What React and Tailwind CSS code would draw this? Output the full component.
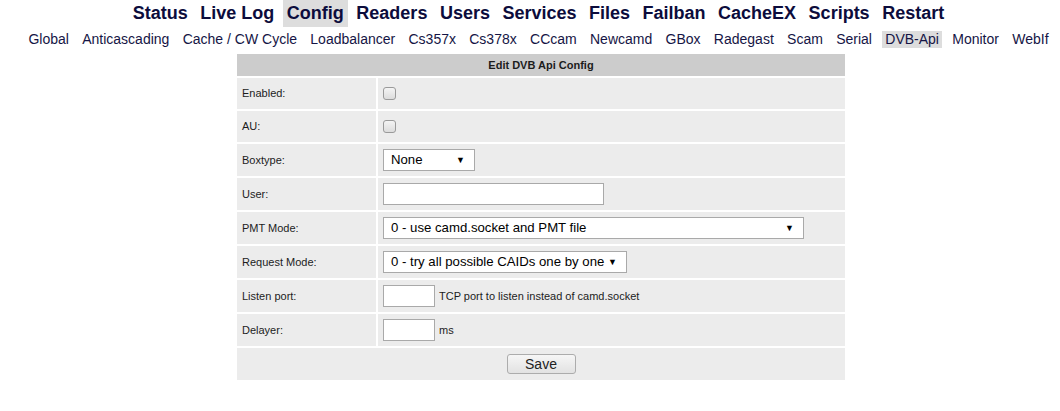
import React from 'react'

const mainMenu = ['Status', 'Live Log', 'Config', 'Readers', 'Users', 'Services', 'Files', 'Failban', 'CacheEX', 'Scripts', 'Restart']
const subMenu = ['Global', 'Anticascading', 'Cache / CW Cycle', 'Loadbalancer', 'Cs357x', 'Cs378x', 'CCcam', 'Newcamd', 'GBox', 'Radegast', 'Scam', 'Serial', 'DVB-Api', 'Monitor', 'WebIf']

const Checkbox = () => (
  <span className="block w-[13px] h-[13px] rounded-[3px] border border-[#9a9a9a] bg-gradient-to-b from-[#f4f4f4] to-[#dcdcdc]" />
)

const Select = ({ value, width }) => (
  <div className={`relative h-[22px] ${width} border border-[#a9a9a9] bg-white`}>
    <span className="block pl-[7px] text-[13.2px] leading-[20px] text-black whitespace-nowrap">{value}</span>
    <span className="absolute right-[9px] top-0 text-[9px] leading-[20px] text-black">▼</span>
  </div>
)

const TextBox = ({ width }) => (
  <div className={`h-[22px] ${width} border border-[#a9a9a9] bg-white`} />
)

const rows = [
  { label: 'Enabled:', h: 'h-[31px]', field: <Checkbox /> },
  { label: 'AU:', h: 'h-[31px]', field: <Checkbox /> },
  { label: 'Boxtype:', field: <Select value="None" width="w-[92px]" /> },
  { label: 'User:', field: <TextBox width="w-[221px]" /> },
  { label: 'PMT Mode:', field: <Select value="0 - use camd.socket and PMT file" width="w-[421px]" /> },
  { label: 'Request Mode:', field: <Select value="0 - try all possible CAIDs one by one" width="w-[244px]" /> },
  {
    label: 'Listen port:',
    field: (
      <div className="flex items-center gap-[4px]">
        <TextBox width="w-[52px]" />
        <span>TCP port to listen instead of camd.socket</span>
      </div>
    ),
  },
  {
    label: 'Delayer:',
    field: (
      <div className="flex items-center gap-[4px]">
        <TextBox width="w-[52px]" />
        <span>ms</span>
      </div>
    ),
  },
]

export default function App() {
  return (
    <div className="w-[1060px] h-[411px] overflow-hidden bg-white" style={{ fontFamily: '"Liberation Sans", Arial, sans-serif' }}>
      <div className="w-[1077px]">
        {/* top menu */}
        <div className="flex justify-center gap-[4.5px] text-[18px] font-bold leading-[27px] text-[#0c0c3c]">
          {mainMenu.map((item) => (
            <span key={item} className={`px-[4px] ${item === 'Config' ? 'bg-[#dddddd]' : ''}`}>
              {item}
            </span>
          ))}
        </div>
        <div className="mt-[4px] flex justify-center gap-[7.3px] text-[14px] leading-[17px] text-[#151545]">
          {subMenu.map((item) => (
            <span key={item} className={`px-[3px] whitespace-nowrap ${item === 'DVB-Api' ? 'bg-[#dddddd]' : ''}`}>
              {item}
            </span>
          ))}
        </div>

        {/* config table */}
        <div className="ml-[237px] mt-[6px] w-[608px] flex flex-col gap-[2px] text-[11px] text-[#1c1c1c]">
          <div className="h-[22px] bg-[#cccccc] flex items-center justify-center font-bold">Edit DVB Api Config</div>
          {rows.map((row) => (
            <div key={row.label} className={`grid grid-cols-[139px_1fr] gap-[2px] ${row.h || 'h-[32px]'}`}>
              <div className="bg-[#ececec] flex items-center pl-[5px]">{row.label}</div>
              <div className="bg-[#ececec] flex items-center pl-[5px]">{row.field}</div>
            </div>
          ))}
          <div className="h-[32px] bg-[#ececec] flex items-center justify-center">
            <button className="w-[69px] h-[20px] rounded-[3px] border border-[#acacac] bg-gradient-to-b from-[#f6f6f6] to-[#e2e2e2] text-[14px] leading-[18px] text-[#222]">
              Save
            </button>
          </div>
        </div>
      </div>
    </div>
  )
}
